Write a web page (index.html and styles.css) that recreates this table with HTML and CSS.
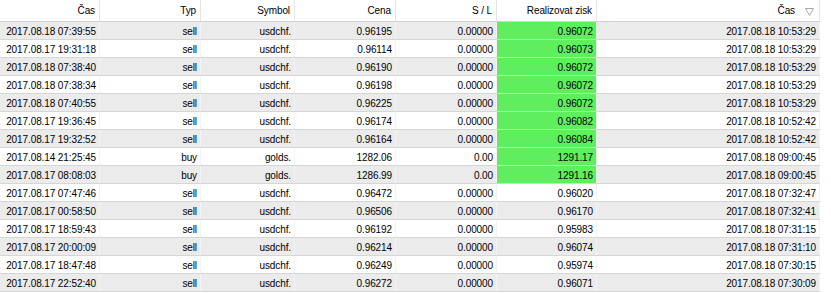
FILE: index.html
```html
<!DOCTYPE html>
<html lang="cs">
<head>
<meta charset="utf-8">
<title>Historie</title>
<link rel="stylesheet" href="styles.css">
</head>
<body>
<div class="grid">
  <div class="row head">
    <div class="c">Čas</div>
    <div class="c">Typ</div>
    <div class="c">Symbol</div>
    <div class="c">Cena</div>
    <div class="c">S / L</div>
    <div class="c">Realizovat zisk</div>
    <div class="c sort">Čas<svg class="tri" width="9" height="8" viewBox="0 0 9 8"><polygon points="0.5,0.5 8.5,0.5 4.5,7.5" fill="none" stroke="#a8a8a8" stroke-width="1"/></svg></div>
  </div>
  <div class="row odd"><div class="c">2017.08.18 07:39:55</div><div class="c">sell</div><div class="c">usdchf.</div><div class="c">0.96195</div><div class="c">0.00000</div><div class="c g">0.96072</div><div class="c">2017.08.18 10:53:29</div></div>
  <div class="row"><div class="c">2017.08.17 19:31:18</div><div class="c">sell</div><div class="c">usdchf.</div><div class="c">0.96114</div><div class="c">0.00000</div><div class="c g">0.96073</div><div class="c">2017.08.18 10:53:29</div></div>
  <div class="row odd"><div class="c">2017.08.18 07:38:40</div><div class="c">sell</div><div class="c">usdchf.</div><div class="c">0.96190</div><div class="c">0.00000</div><div class="c g">0.96072</div><div class="c">2017.08.18 10:53:29</div></div>
  <div class="row"><div class="c">2017.08.18 07:38:34</div><div class="c">sell</div><div class="c">usdchf.</div><div class="c">0.96198</div><div class="c">0.00000</div><div class="c g">0.96072</div><div class="c">2017.08.18 10:53:29</div></div>
  <div class="row odd"><div class="c">2017.08.18 07:40:55</div><div class="c">sell</div><div class="c">usdchf.</div><div class="c">0.96225</div><div class="c">0.00000</div><div class="c g">0.96072</div><div class="c">2017.08.18 10:53:29</div></div>
  <div class="row"><div class="c">2017.08.17 19:36:45</div><div class="c">sell</div><div class="c">usdchf.</div><div class="c">0.96174</div><div class="c">0.00000</div><div class="c g">0.96082</div><div class="c">2017.08.18 10:52:42</div></div>
  <div class="row odd"><div class="c">2017.08.17 19:32:52</div><div class="c">sell</div><div class="c">usdchf.</div><div class="c">0.96164</div><div class="c">0.00000</div><div class="c g">0.96084</div><div class="c">2017.08.18 10:52:42</div></div>
  <div class="row"><div class="c">2017.08.14 21:25:45</div><div class="c">buy</div><div class="c">golds.</div><div class="c">1282.06</div><div class="c">0.00</div><div class="c g">1291.17</div><div class="c">2017.08.18 09:00:45</div></div>
  <div class="row odd"><div class="c">2017.08.17 08:08:03</div><div class="c">buy</div><div class="c">golds.</div><div class="c">1286.99</div><div class="c">0.00</div><div class="c g">1291.16</div><div class="c">2017.08.18 09:00:45</div></div>
  <div class="row"><div class="c">2017.08.17 07:47:46</div><div class="c">sell</div><div class="c">usdchf.</div><div class="c">0.96472</div><div class="c">0.00000</div><div class="c">0.96020</div><div class="c">2017.08.18 07:32:47</div></div>
  <div class="row odd"><div class="c">2017.08.17 00:58:50</div><div class="c">sell</div><div class="c">usdchf.</div><div class="c">0.96506</div><div class="c">0.00000</div><div class="c">0.96170</div><div class="c">2017.08.18 07:32:41</div></div>
  <div class="row"><div class="c">2017.08.17 18:59:43</div><div class="c">sell</div><div class="c">usdchf.</div><div class="c">0.96192</div><div class="c">0.00000</div><div class="c">0.95983</div><div class="c">2017.08.18 07:31:15</div></div>
  <div class="row odd"><div class="c">2017.08.17 20:00:09</div><div class="c">sell</div><div class="c">usdchf.</div><div class="c">0.96214</div><div class="c">0.00000</div><div class="c">0.96074</div><div class="c">2017.08.18 07:31:10</div></div>
  <div class="row"><div class="c">2017.08.17 18:47:48</div><div class="c">sell</div><div class="c">usdchf.</div><div class="c">0.96249</div><div class="c">0.00000</div><div class="c">0.95974</div><div class="c">2017.08.18 07:30:15</div></div>
  <div class="row odd"><div class="c">2017.08.17 22:52:40</div><div class="c">sell</div><div class="c">usdchf.</div><div class="c">0.96272</div><div class="c">0.00000</div><div class="c">0.96071</div><div class="c">2017.08.18 07:30:09</div></div>
</div>
</body>
</html>
```
FILE: styles.css
```css
html, body {
  margin: 0;
  padding: 0;
  background: #ffffff;
}
body {
  font-family: "Liberation Sans", Arial, sans-serif;
  font-size: 10px;
  letter-spacing: -0.1px;
  color: #000000;
}
.grid {
  width: 820px;
  display: flex;
  flex-direction: column;
}
.row {
  display: grid;
  grid-template-columns: 100px 101px 94px 101px 101px 100px 223px;
  height: 18px;
  box-sizing: border-box;
  border-bottom: 1px solid #d6d6d6;
  background: #ffffff;
}
.row.odd {
  background: #ebebeb;
}
.row.head {
  height: 22px;
  border-bottom: 1px solid #d2d2d2;
  background: #ffffff;
}
.c {
  box-sizing: border-box;
  border-right: 1px solid #f3f3f3;
  display: flex;
  align-items: center;
  justify-content: flex-end;
  padding-right: 3px;
  padding-top: 1px;
  white-space: nowrap;
  overflow: hidden;
}
.head .c {
  border-right: 1px solid #e6e6e6;
  padding-right: 4px;
  padding-top: 0;
  align-items: flex-start;
  padding-top: 5px;
}
.c.g {
  background: #5eee5e;
}
.head .sort {
  padding-right: 5px;
}
.tri {
  margin-left: 10px;
  margin-top: 3px;
}
```
